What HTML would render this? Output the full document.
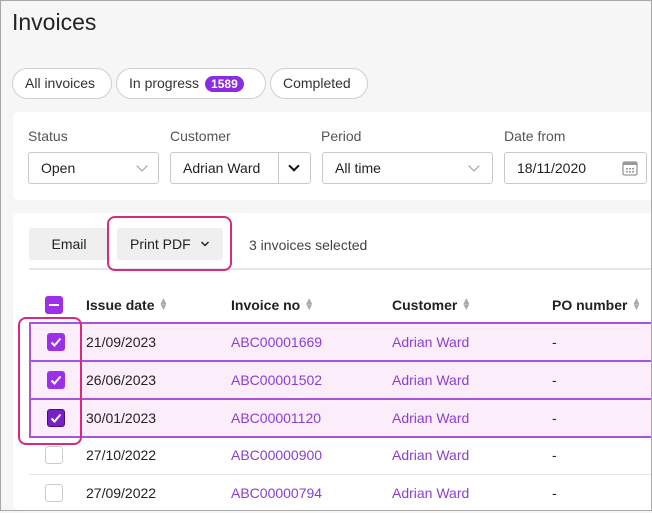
<!DOCTYPE html>
<html><head><meta charset="utf-8"><style>
*{box-sizing:border-box;margin:0;padding:0}
body{width:652px;height:511px;overflow:hidden;background:#f6f6f6;font-family:"Liberation Sans",sans-serif;color:#222;position:relative;border:1px solid #a8a8a8}
.abs{position:absolute}
.pill{position:absolute;top:67px;height:31px;border:1px solid #cfcfcf;border-radius:16px;background:#fff;font-size:14px;line-height:29px;padding:0 12px;color:#333}
.badge{display:inline-block;background:#8b2be2;color:#fff;font-weight:bold;font-size:12px;border-radius:9px;padding:0 6px;line-height:16px;margin-left:6px}
.card{position:absolute;left:12px;right:0;background:#fff;border-radius:6px 0 0 6px}
.lbl{position:absolute;top:127px;font-size:14px;color:#555}
.sel{position:absolute;top:151px;height:32px;border:1px solid #c9c9c9;border-radius:3px;background:#fff;font-size:14px;line-height:30px;padding-left:12px;color:#222}
.chev{position:absolute;top:9px;width:8px;height:8px;border-right:1.5px solid #888;border-bottom:1.5px solid #888;transform:rotate(45deg)}
.th{position:absolute;top:296px;font-size:14px;font-weight:bold;color:#222}
.sort{display:inline-block;margin-left:4px;color:#aaa;font-size:10px;line-height:6px;vertical-align:0px}
.row{position:absolute;left:28px;right:0;height:38px;font-size:14px}
.row.s{background:#fcedfb;border:2px solid #a855d6;border-right:none;height:40px}
.row.n{border-bottom:1px solid #e4e4e4}
.row span{position:absolute;top:10px}
.a{color:#8a3fd1}
.cb{position:absolute;left:16px;top:9px;width:18px;height:18px;border-radius:3px;background:#9b30e8}
.cb svg{position:absolute;left:2px;top:2px}
.cb.e{background:#fff;border:1px solid #ccc}
.hl{position:absolute;border:2.5px solid #d62a7f;border-radius:8px}
</style></head><body>
<div class="abs" style="left:11px;top:8px;font-size:23px;color:#222">Invoices</div>
<div class="pill" style="left:11px;width:100px">All invoices</div>
<div class="pill" style="left:115px;width:150px">In progress<span class="badge">1589</span></div>
<div class="pill" style="left:269px;width:98px">Completed</div>

<div class="card" style="top:111px;height:88px"></div>
<div class="lbl" style="left:27px">Status</div>
<div class="lbl" style="left:169px">Customer</div>
<div class="lbl" style="left:320px">Period</div>
<div class="lbl" style="left:503px">Date from</div>
<div class="sel" style="left:27px;width:131px">Open<div class="chev" style="right:12px;border-color:#999"></div></div>
<div class="sel" style="left:169px;width:141px">Adrian Ward<div class="abs" style="left:107px;top:0;height:30px;border-left:1px solid #c9c9c9"></div><div class="chev" style="right:12px;border-color:#111;border-width:2px"></div></div>
<div class="sel" style="left:321px;width:171px">All time<div class="chev" style="right:14px;border-color:#999"></div></div>
<div class="sel" style="left:503px;width:143px">18/11/2020
<svg class="abs" style="right:8px;top:7px" width="16" height="16" viewBox="0 0 16 16"><rect x="1" y="2" width="14" height="13" rx="1.5" fill="none" stroke="#999" stroke-width="1.3"/><rect x="1" y="2" width="14" height="3" fill="#999"/><g fill="#999"><rect x="4" y="8" width="2" height="1.5"/><rect x="7" y="8" width="2" height="1.5"/><rect x="10" y="8" width="2" height="1.5"/><rect x="4" y="11" width="2" height="1.5"/><rect x="7" y="11" width="2" height="1.5"/><rect x="10" y="11" width="2" height="1.5"/></g></svg></div>

<div class="card" style="top:212px;bottom:0"></div>
<div class="abs" style="left:28px;top:227px;width:80px;height:32px;background:#efefef;border-radius:3px;font-size:14px;line-height:32px;text-align:center">Email</div>
<div class="abs" style="left:116px;top:227px;width:106px;height:32px;background:#efefef;border-radius:3px;font-size:14px;line-height:32px;padding-left:13px">Print PDF <svg width="10" height="8" style="margin-left:5px;vertical-align:1px"><path d="M1.5 2l3.5 3.5 3.5-3.5" stroke="#222" stroke-width="1.5" fill="none"/></svg></div>
<div class="abs" style="left:248px;top:236px;font-size:14px;color:#444">3 invoices selected</div>
<div class="abs" style="left:28px;right:0;top:267px;border-top:2px solid #e6e6e6"></div>

<div class="abs" style="left:44px;top:295px;width:18px;height:18px;border-radius:3px;background:#9b30e8"><div class="abs" style="left:4px;top:8px;width:10px;height:2px;background:#fff"></div></div>
<div class="th" style="left:85px">Issue date<span class="sort">▲<br>▼</span></div>
<div class="th" style="left:230px">Invoice no<span class="sort">▲<br>▼</span></div>
<div class="th" style="left:391px">Customer<span class="sort">▲<br>▼</span></div>
<div class="th" style="left:551px">PO number<span class="sort">▲<br>▼</span></div>

<div class="row s" style="top:321px"><div class="cb" style="top:9px"><svg width="14" height="14"><path d="M2.5 7.5l3 3 6-7" stroke="#fff" stroke-width="2" fill="none"/></svg></div><span style="left:55px;top:10px">21/09/2023</span><span class="a" style="left:200px;top:10px">ABC00001669</span><span class="a" style="left:361px;top:10px">Adrian Ward</span><span style="left:521px;top:10px">-</span></div>
<div class="row s" style="top:359px"><div class="cb" style="top:9px"><svg width="14" height="14"><path d="M2.5 7.5l3 3 6-7" stroke="#fff" stroke-width="2" fill="none"/></svg></div><span style="left:55px;top:10px">26/06/2023</span><span class="a" style="left:200px;top:10px">ABC00001502</span><span class="a" style="left:361px;top:10px">Adrian Ward</span><span style="left:521px;top:10px">-</span></div>
<div class="row s" style="top:397px"><div class="cb" style="top:9px;background:#7a1fc8;border:1px solid #4a0d80"><svg width="14" height="14" style="left:1px;top:1px"><path d="M2.5 7.5l3 3 6-7" stroke="#fff" stroke-width="2" fill="none"/></svg></div><span style="left:55px;top:10px">30/01/2023</span><span class="a" style="left:200px;top:10px">ABC00001120</span><span class="a" style="left:361px;top:10px">Adrian Ward</span><span style="left:521px;top:10px">-</span></div>
<div class="row n" style="top:436px"><div class="cb e"></div><span style="left:57px">27/10/2022</span><span class="a" style="left:202px">ABC00000900</span><span class="a" style="left:363px">Adrian Ward</span><span style="left:523px">-</span></div>
<div class="row" style="top:474px"><div class="cb e"></div><span style="left:57px">27/09/2022</span><span class="a" style="left:202px">ABC00000794</span><span class="a" style="left:363px">Adrian Ward</span><span style="left:523px">-</span></div>

<div class="hl" style="left:106px;top:215px;width:125px;height:55px"></div>
<div class="hl" style="left:17px;top:316px;width:64px;height:128px"></div>
</body></html>
